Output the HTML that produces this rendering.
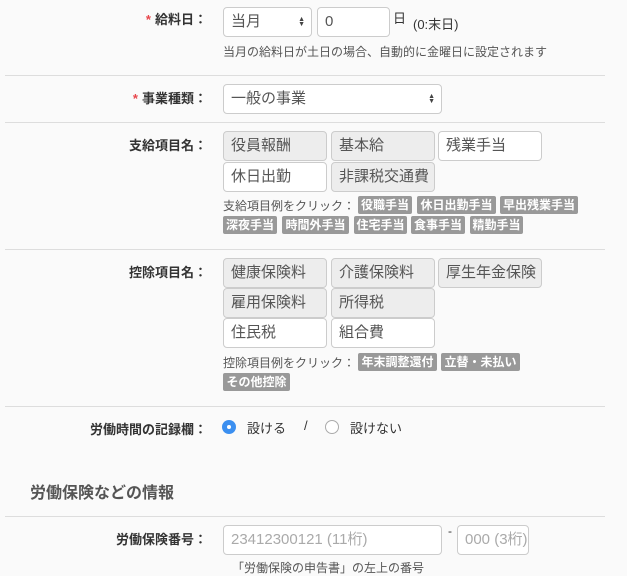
<!DOCTYPE html>
<html><head><meta charset="utf-8">
<style>
*{box-sizing:border-box;margin:0;padding:0}
body{width:627px;height:574px;background:#fafafa;font-family:"Liberation Sans","Noto Sans CJK JP",sans-serif;color:#333;position:relative;overflow:hidden}
.a{position:absolute;white-space:nowrap}
.lbl{font-weight:bold;font-size:13px;text-align:right;right:420px;line-height:16px}
.req{color:#e8464b;margin-right:4px}
.box{position:absolute;height:30px;border:1px solid #ccc;border-radius:4px;background:#fff;font-size:15px;line-height:28px;padding-left:7px;color:#555}
.g{background:#ededed}
.hr{position:absolute;left:5px;width:600px;height:1px;background:#ddd}
.tag{position:absolute;height:18px;background:#999;color:#fff;font-weight:bold;font-size:12px;line-height:18px;text-align:center;border-radius:2px;overflow:hidden}
.small{font-size:12px;color:#555}
.arr{position:absolute;right:6px;top:9px;font-size:7px;line-height:5px;color:#444}
.ph{color:#aaa}
</style></head><body>
<div class="a lbl" style="top:12px"><span class="req">*</span>給料日：</div>
<div class="box" style="left:223px;top:7px;width:89px">当月<div class="arr">▲<br>▼</div></div>
<div class="box" style="left:317px;top:7px;width:73px">0</div>
<div class="a" style="left:393px;top:8px;font-size:13px">日</div>
<div class="a" style="left:413px;top:14px;font-size:13px">(0:末日)</div>
<div class="a small" style="left:223px;top:43px">当月の給料日が土日の場合、自動的に金曜日に設定されます</div>
<div class="hr" style="top:75px"></div>

<div class="a lbl" style="top:91px"><span class="req">*</span>事業種類：</div>
<div class="box" style="left:223px;top:84px;width:219px">一般の事業<div class="arr">▲<br>▼</div></div>
<div class="hr" style="top:122px"></div>

<div class="a lbl" style="top:138px">支給項目名：</div>
<div class="box g" style="left:223px;top:131px;width:104px">役員報酬</div>
<div class="box g" style="left:331px;top:131px;width:104px">基本給</div>
<div class="box" style="left:438px;top:131px;width:104px">残業手当</div>
<div class="box" style="left:223px;top:162px;width:104px">休日出勤</div>
<div class="box g" style="left:331px;top:162px;width:104px">非課税交通費</div>
<div class="a small" style="left:223px;top:197px">支給項目例をクリック：</div>
<div class="tag" style="left:358px;top:196px;width:54px">役職手当</div>
<div class="tag" style="left:417px;top:196px;width:79px">休日出勤手当</div>
<div class="tag" style="left:500px;top:196px;width:78px">早出残業手当</div>
<div class="tag" style="left:223px;top:216px;width:54px">深夜手当</div>
<div class="tag" style="left:282px;top:216px;width:67px">時間外手当</div>
<div class="tag" style="left:354px;top:216px;width:53px">住宅手当</div>
<div class="tag" style="left:411px;top:216px;width:54px">食事手当</div>
<div class="tag" style="left:470px;top:216px;width:53px">精勤手当</div>
<div class="hr" style="top:249px"></div>

<div class="a lbl" style="top:265px">控除項目名：</div>
<div class="box g" style="left:223px;top:258px;width:104px">健康保険料</div>
<div class="box g" style="left:331px;top:258px;width:104px">介護保険料</div>
<div class="box g" style="left:438px;top:258px;width:104px">厚生年金保険</div>
<div class="box g" style="left:223px;top:288px;width:104px">雇用保険料</div>
<div class="box g" style="left:331px;top:288px;width:104px">所得税</div>
<div class="box" style="left:223px;top:318px;width:104px">住民税</div>
<div class="box" style="left:331px;top:318px;width:104px">組合費</div>
<div class="a small" style="left:223px;top:354px">控除項目例をクリック：</div>
<div class="tag" style="left:358px;top:353px;width:79px">年末調整還付</div>
<div class="tag" style="left:441px;top:353px;width:79px">立替・未払い</div>
<div class="tag" style="left:223px;top:373px;width:67px">その他控除</div>
<div class="hr" style="top:406px"></div>

<div class="a lbl" style="top:422px">労働時間の記録欄：</div>
<div class="a" style="left:222px;top:420px;width:14px;height:14px;border-radius:50%;background:#3b8ff0"><div style="position:absolute;left:5px;top:5px;width:4px;height:4px;border-radius:50%;background:#fff"></div></div>
<div class="a" style="left:247px;top:418px;font-size:13px">設ける</div>
<div class="a" style="left:304px;top:418px;font-size:13px">/</div>
<div class="a" style="left:325px;top:420px;width:14px;height:14px;border-radius:50%;border:1px solid #aaa;background:#fff"></div>
<div class="a" style="left:350px;top:418px;font-size:13px">設けない</div>

<div class="a" style="left:30px;top:479px;font-size:16px;font-weight:bold;color:#555">労働保険などの情報</div>
<div class="hr" style="top:516px"></div>

<div class="a lbl" style="top:532px">労働保険番号：</div>
<div class="box ph" style="left:223px;top:525px;width:219px">23412300121 (11桁)</div>
<div class="a" style="left:448px;top:524px;font-size:12px">-</div>
<div class="box ph" style="left:457px;top:525px;width:72px">000 (3桁)</div>
<div class="a small" style="left:232px;top:559px">「労働保険の申告書」の左上の番号</div>
</body></html>
